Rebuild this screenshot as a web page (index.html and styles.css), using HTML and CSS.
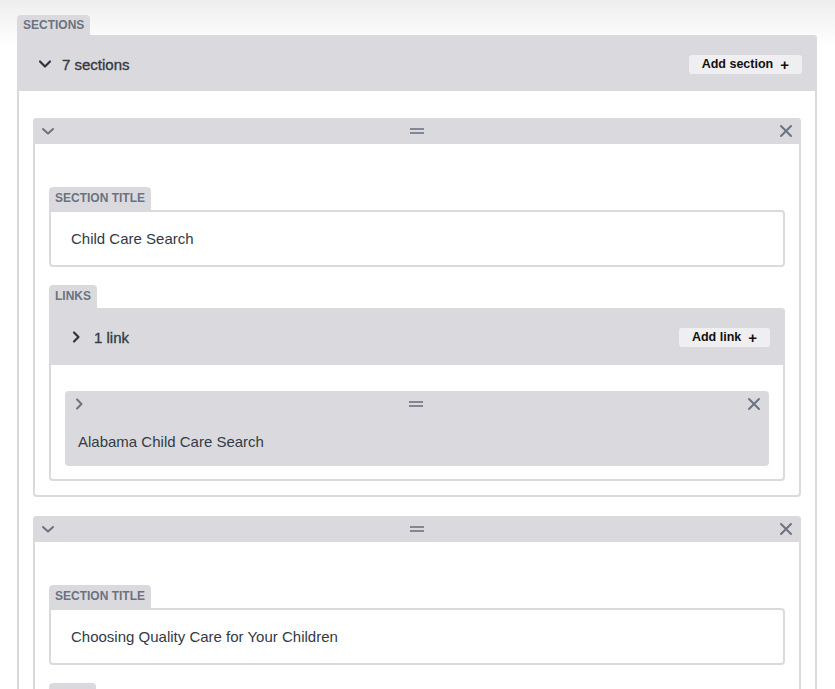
FILE: index.html
```html
<!DOCTYPE html>
<html>
<head>
<meta charset="utf-8">
<link rel="stylesheet" href="styles.css">
</head>
<body>
<div class="page">
  <div class="tab tab-sections">SECTIONS</div>
  <div class="panel">
    <div class="panel-head">
      <div class="head-left">
        <svg class="chev-lg" width="14" height="10" viewBox="0 0 14 10"><polyline points="2,2.5 7,7.5 12,2.5" fill="none" stroke="#2f3440" stroke-width="2.2" stroke-linecap="round" stroke-linejoin="round"/></svg>
        <span class="count">7 sections</span>
      </div>
      <button class="add-btn">Add section <span class="plus">+</span></button>
    </div>
    <div class="panel-body">
      <div class="card">
        <div class="card-head">
          <svg class="chev-sm" width="14" height="10" viewBox="0 0 14 10"><polyline points="2,3 7,7.5 12,3" fill="none" stroke="#6b7280" stroke-width="2" stroke-linecap="round" stroke-linejoin="round"/></svg>
          <svg class="handle" width="16" height="8" viewBox="0 0 16 8"><line x1="1" y1="2" x2="15" y2="2" stroke="#6b7280" stroke-width="1.6"/><line x1="1" y1="6" x2="15" y2="6" stroke="#6b7280" stroke-width="1.6"/></svg>
          <svg class="close" width="14" height="14" viewBox="0 0 14 14"><path d="M2 2L12 12M12 2L2 12" stroke="#6b7280" stroke-width="2" stroke-linecap="round"/></svg>
        </div>
        <div class="card-body">
          <div class="field">
            <div class="tab">SECTION TITLE</div>
            <div class="input">Child Care Search</div>
          </div>
          <div class="field">
            <div class="tab">LINKS</div>
            <div class="links">
              <div class="links-head">
                <div class="head-left">
                  <svg class="chev-r" width="10" height="14" viewBox="0 0 10 14"><polyline points="3,2.5 7.5,7 3,11.5" fill="none" stroke="#2f3440" stroke-width="2.2" stroke-linecap="round" stroke-linejoin="round"/></svg>
                  <span class="count">1 link</span>
                </div>
                <button class="add-btn">Add link <span class="plus">+</span></button>
              </div>
              <div class="links-body">
                <div class="item">
                  <div class="item-head">
                    <svg class="chev-r-sm" width="10" height="14" viewBox="0 0 10 14"><polyline points="3,2.5 7.5,7 3,11.5" fill="none" stroke="#6b7280" stroke-width="2" stroke-linecap="round" stroke-linejoin="round"/></svg>
                    <svg class="handle" width="16" height="8" viewBox="0 0 16 8"><line x1="1" y1="2" x2="15" y2="2" stroke="#6b7280" stroke-width="1.6"/><line x1="1" y1="6" x2="15" y2="6" stroke="#6b7280" stroke-width="1.6"/></svg>
                    <svg class="close" width="14" height="14" viewBox="0 0 14 14"><path d="M2 2L12 12M12 2L2 12" stroke="#6b7280" stroke-width="2" stroke-linecap="round"/></svg>
                  </div>
                  <div class="item-text">Alabama Child Care Search</div>
                </div>
              </div>
            </div>
          </div>
        </div>
      </div>

      <div class="card">
        <div class="card-head">
          <svg class="chev-sm" width="14" height="10" viewBox="0 0 14 10"><polyline points="2,3 7,7.5 12,3" fill="none" stroke="#6b7280" stroke-width="2" stroke-linecap="round" stroke-linejoin="round"/></svg>
          <svg class="handle" width="16" height="8" viewBox="0 0 16 8"><line x1="1" y1="2" x2="15" y2="2" stroke="#6b7280" stroke-width="1.6"/><line x1="1" y1="6" x2="15" y2="6" stroke="#6b7280" stroke-width="1.6"/></svg>
          <svg class="close" width="14" height="14" viewBox="0 0 14 14"><path d="M2 2L12 12M12 2L2 12" stroke="#6b7280" stroke-width="2" stroke-linecap="round"/></svg>
        </div>
        <div class="card-body">
          <div class="field">
            <div class="tab">SECTION TITLE</div>
            <div class="input">Choosing Quality Care for Your Children</div>
          </div>
          <div class="field">
            <div class="tab tab-blank"></div>
          </div>
        </div>
      </div>
    </div>
  </div>
</div>
</body>
</html>
```

FILE: styles.css
```css
html, body {
  margin: 0;
  padding: 0;
}
body {
  background: linear-gradient(to bottom, #eeeeee 0px, #ffffff 46px) no-repeat;
  background-color: #fff;
  font-family: "Liberation Sans", Arial, sans-serif;
  color: #333a45;
  overflow: hidden;
  height: 689px;
}
.page {
  padding: 15px 18px 0 17px;
}
.tab {
  display: inline-block;
  background: #dadade;
  color: #6b7280;
  font-size: 12px;
  font-weight: bold;
  height: 23px;
  line-height: 23px;
  padding: 0 6px;
  border-radius: 4px 4px 0 0;
  vertical-align: top;
}
.tab-blank {
  width: 35px;
}
.tab-sections {
  height: 20px;
  line-height: 21px;
  width: 61px;
}
.panel {
  border: 2px solid #dadade;
  border-top: 0;
  border-radius: 0 4px 0 0;
}
.panel-head {
  background: #dadade;
  height: 56px;
  box-sizing: border-box;
  display: flex;
  align-items: center;
  justify-content: space-between;
  border-radius: 0 4px 0 0;
  margin: 0 -2px 0 -2px;
  padding: 2px 15px 0 21px;
}
.head-left {
  display: flex;
  align-items: center;
}
.chev-lg {
  display: block;
  margin-right: 10px;
  margin-top: -1px;
}
.count {
  font-size: 15px;
  color: #333a45;
  -webkit-text-stroke: 0.35px #333a45;
}
.add-btn {
  border: 0;
  background: #efeff1;
  border-radius: 3px;
  font-family: "Liberation Sans", Arial, sans-serif;
  font-size: 12.5px;
  font-weight: bold;
  color: #111;
  height: 19px;
  padding: 0 13px 0 13px;
  display: flex;
  align-items: center;
}
.add-btn .plus {
  font-size: 15px;
  margin-left: 7px;
  line-height: 19px;
}
.panel-body {
  padding: 27px 14px 0 14px;
}
.card {
  border: 2px solid #dadade;
  border-top: 0;
  border-radius: 4px;
  margin-bottom: 19px;
}
.card-head {
  background: #dadade;
  height: 26px;
  margin: 0 -2px;
  border-radius: 4px 4px 0 0;
  display: flex;
  align-items: center;
  justify-content: space-between;
  padding: 0 8px 0 8px;
}
.card-head svg, .item-head svg {
  display: block;
}
.card-body {
  padding: 43px 14px 14px 14px;
}
.field {
  margin-bottom: 18px;
}
.field:last-child {
  margin-bottom: 0;
}
.input {
  border: 2px solid #dadade;
  border-radius: 0 4px 4px 4px;
  height: 53px;
  display: flex;
  align-items: center;
  padding: 0 20px;
  font-size: 15px;
  color: #333a45;
}
.links {
  border: 2px solid #dadade;
  border-top: 0;
  border-radius: 0 4px 4px 4px;
}
.links-head {
  background: #dadade;
  height: 57px;
  box-sizing: border-box;
  margin: 0 -2px;
  border-radius: 0 4px 0 0;
  display: flex;
  align-items: center;
  justify-content: space-between;
  padding: 1px 15px 0 22px;
}
.chev-r {
  margin-right: 13px;
}
.links-body {
  padding: 26px 14px 13px 14px;
}
.item {
  background: #dadade;
  border-radius: 4px;
  height: 75px;
}
.item-head {
  height: 26px;
  display: flex;
  align-items: center;
  justify-content: space-between;
  padding: 0 8px 0 9px;
}
.item-text {
  font-size: 15px;
  color: #333a45;
  padding: 15px 13px 0 13px;
  line-height: 20px;
}
```
